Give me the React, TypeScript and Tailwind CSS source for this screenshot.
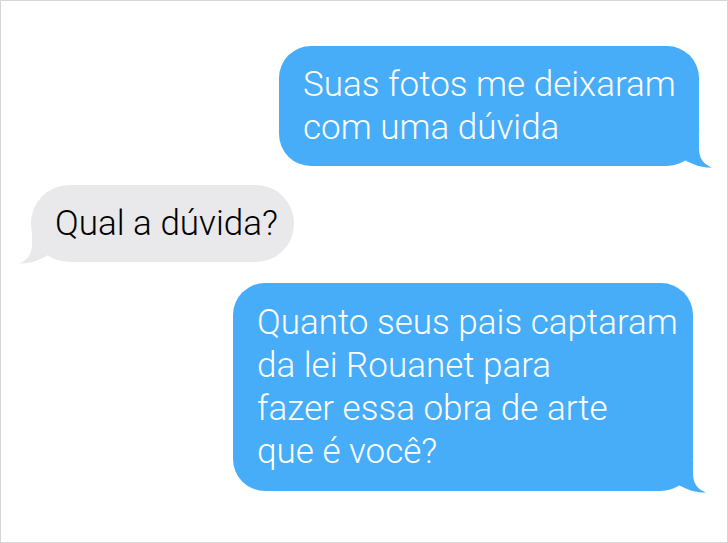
const BLUE = '#47adf9';

function RightTail({ className = '' }: { className?: string }) {
  return (
    <svg
      className={`absolute ${className}`}
      width="38"
      height="32"
      viewBox="0 0 38 32"
      fill={BLUE}
    >
      <path d="M24 0 L24 12 C24 22 28 28 37 31.5 C29 32 20 30 8 23 L0 23 L0 0 Z" />
    </svg>
  );
}

function LeftTail({ className = '' }: { className?: string }) {
  return (
    <svg
      className={`absolute ${className}`}
      width="38"
      height="32"
      viewBox="0 0 38 32"
      fill="#e9e9eb"
    >
      <path d="M14 0 L14 12 C14 22 10 28 1 31.5 C9 32 18 30 30 23 L38 23 L38 0 Z" />
    </svg>
  );
}

export default function App() {
  return (
    <div
      className="w-[728px] h-[543px] bg-white border border-[#d6d6d6] flex flex-col pt-[45px] overflow-hidden"
      style={{ fontFamily: 'Roboto, "Noto Sans", sans-serif' }}
    >
      {/* sent */}
      <div className="flex justify-end pr-[28px]">
        <div className="relative">
          <div className="relative z-10 bg-[#47adf9] text-white rounded-[32px] w-[420px] h-[120px] px-[24px] py-[17px] text-[35px] font-light leading-[43px] whitespace-nowrap">
            Suas fotos me deixaram
            <br />
            com uma dúvida
          </div>
          <RightTail className="right-[-14px] bottom-[-2px]" />
        </div>
      </div>

      {/* received */}
      <div className="flex justify-start pl-[30px] mt-[19px]">
        <div className="relative">
          <div className="relative z-10 bg-[#e9e9eb] text-black rounded-[38px] w-[263px] h-[77px] px-[24px] py-[17px] text-[35px] font-light leading-[43px] whitespace-nowrap">
            Qual a dúvida?
          </div>
          <LeftTail className="left-[-13px] bottom-[-2px]" />
        </div>
      </div>

      {/* sent */}
      <div className="flex justify-end pr-[34px] mt-[21px]">
        <div className="relative">
          <div className="relative z-10 bg-[#47adf9] text-white rounded-[32px] w-[460px] h-[208px] px-[24px] py-[18px] text-[35px] font-light leading-[43px] whitespace-nowrap">
            Quanto seus pais captaram
            <br />
            da lei Rouanet para
            <br />
            fazer essa obra de arte
            <br />
            que é você?
          </div>
          <RightTail className="right-[-14px] bottom-[-2px]" />
        </div>
      </div>
    </div>
  );
}
